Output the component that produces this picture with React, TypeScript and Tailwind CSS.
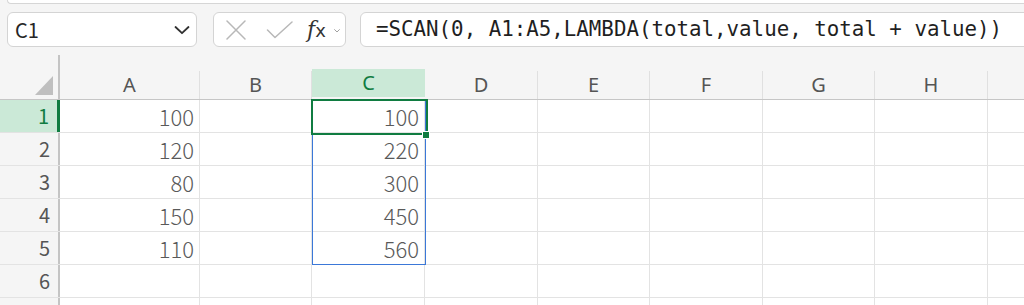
import React from "react";

const cols = ["A", "B", "C", "D", "E", "F", "G", "H", ""];
const colW = [140, 112, 113, 113, 112, 113, 112, 113, 112];
const dataA = ["100", "120", "80", "150", "110", "", ""];
const dataC = ["100", "220", "300", "450", "560", "", ""];

const numFont = { fontFamily: '"Noto Sans CJK JP", "Noto Sans", sans-serif' };

export default function App() {
  return (
    <div
      className="relative w-[1024px] h-[305px] overflow-hidden bg-[#f5f5f5]"
      style={{ fontFamily: '"Noto Sans", "Noto Sans CJK JP", sans-serif' }}
    >
      {/* top strip */}
      <div className="ml-[7px] h-[4px] bg-white border-l border-b border-[#d6d6d6] rounded-bl-[6px]" />

      {/* toolbar */}
      <div className="mt-[8px] flex h-[35px] items-stretch">
        <div className="ml-[7px] w-[190px] flex items-center justify-between bg-white border border-[#d4d4d4] rounded-[6px] pl-[7px] pr-[5px]">
          <span className="text-[20px] text-[#262626] leading-none" style={numFont}>C1</span>
          <svg width="16" height="10" viewBox="0 0 16 10" className="mr-[1px]">
            <path d="M1.5 2 L8 8.2 L14.5 2" fill="none" stroke="#303030" strokeWidth="1.8" strokeLinecap="round" strokeLinejoin="round" />
          </svg>
        </div>
        <div className="ml-[16px] w-[133px] flex items-center bg-white border border-[#d4d4d4] rounded-[6px]">
          <svg width="22" height="20" viewBox="0 0 22 20" className="ml-[11px]">
            <path d="M2 1 L20 19 M20 1 L2 19" stroke="#b8b8b8" strokeWidth="1.5" strokeLinecap="round" />
          </svg>
          <svg width="28" height="18" viewBox="0 0 28 18" className="ml-[19px]">
            <path d="M1.5 9 L9 16.5 L26 1" fill="none" stroke="#b8b8b8" strokeWidth="1.5" strokeLinecap="round" strokeLinejoin="round" />
          </svg>
          <span
            className="ml-[13px] text-[#333] leading-none italic"
            style={{ fontFamily: '"DejaVu Serif", "Liberation Serif", serif', fontSize: "22px" }}
          >
            f<span className="text-[18px] not-italic" style={{ fontFamily: '"DejaVu Sans", sans-serif' }}>x</span>
          </span>
          <svg width="6" height="4" viewBox="0 0 6 4" className="ml-[8px] mt-[2px]">
            <path d="M0.6 0.6 L3 3 L5.4 0.6" fill="none" stroke="#a0a0a0" strokeWidth="1" strokeLinecap="round" />
          </svg>
        </div>
        <div className="ml-[14px] flex-1 -mr-[20px] flex items-center bg-white border border-[#d4d4d4] rounded-[6px] pl-[15px]">
          <span
            className="text-[#1f1f1f] leading-none whitespace-pre"
            style={{ fontFamily: '"DejaVu Sans Mono", "Liberation Mono", monospace', fontSize: "20.8px" }}
          >
            =SCAN(0, A1:A5,LAMBDA(total,value, total + value))
          </span>
        </div>
      </div>

      {/* grid */}
      <div className="relative mt-[8px]">
        {/* header row */}
        <div className="flex h-[45px] border-b border-[#c6c6c6]">
          <div className="w-[60px] shrink-0 border-r-2 border-[#c4c4c4] flex items-end justify-end pr-[5px] pb-[4px]">
            <svg width="18" height="19" viewBox="0 0 18 19">
              <path d="M18 0 L18 19 L0 19 Z" fill="#bfbfbf" />
            </svg>
          </div>
          {cols.map((c, i) => (
            <div key={i} className="shrink-0 flex items-end" style={{ width: colW[i] }}>
              <div
                className={
                  "w-full h-[28px] flex items-center justify-center text-[20px] leading-none border-r border-[#e0e0e0] " +
                  (c === "C" ? "bg-[#cbe9d7] text-[#107c41] h-[26px] mb-[2px] border-r-0" : "text-[#555]")
                }
              >
                {c}
              </div>
            </div>
          ))}
        </div>

        {/* body rows */}
        {dataA.map((a, r) => (
          <div key={r} className="flex h-[33px] border-b border-[#e3e3e3]">
            <div
              className={
                "w-[60px] shrink-0 flex items-center justify-end pr-[8px] text-[20px] leading-none " +
                (r === 0
                  ? "bg-[#cbe9d7] text-[#107c41] border-r-[3px] border-[#107c41]"
                  : "text-[#555] border-r-2 border-[#c4c4c4]")
              }
              style={numFont}
            >
              {r < 6 ? r + 1 : ""}
            </div>
            {colW.map((w, i) => (
              <div
                key={i}
                className="shrink-0 flex items-center justify-end pr-[5px] border-r border-[#e3e3e3] text-[22px] font-light text-[#595959] leading-none bg-white"
                style={{ width: w, ...numFont }}
              >
                {i === 0 ? a : i === 2 ? dataC[r] : ""}
              </div>
            ))}
          </div>
        ))}

        {/* blue range C1:C5 */}
        <div className="absolute left-[312px] top-[45px] w-[114px] h-[165px] border border-[#3b78d8] pointer-events-none" />
        {/* active cell C1 */}
        <div className="absolute left-[311px] top-[44px] w-[117px] h-[36px] border-2 border-[#107c41] pointer-events-none" />
        {/* fill handle */}
        <div className="absolute left-[422px] top-[76px] w-[8px] h-[8px] bg-[#107c41] border border-white pointer-events-none" />
      </div>
    </div>
  );
}
